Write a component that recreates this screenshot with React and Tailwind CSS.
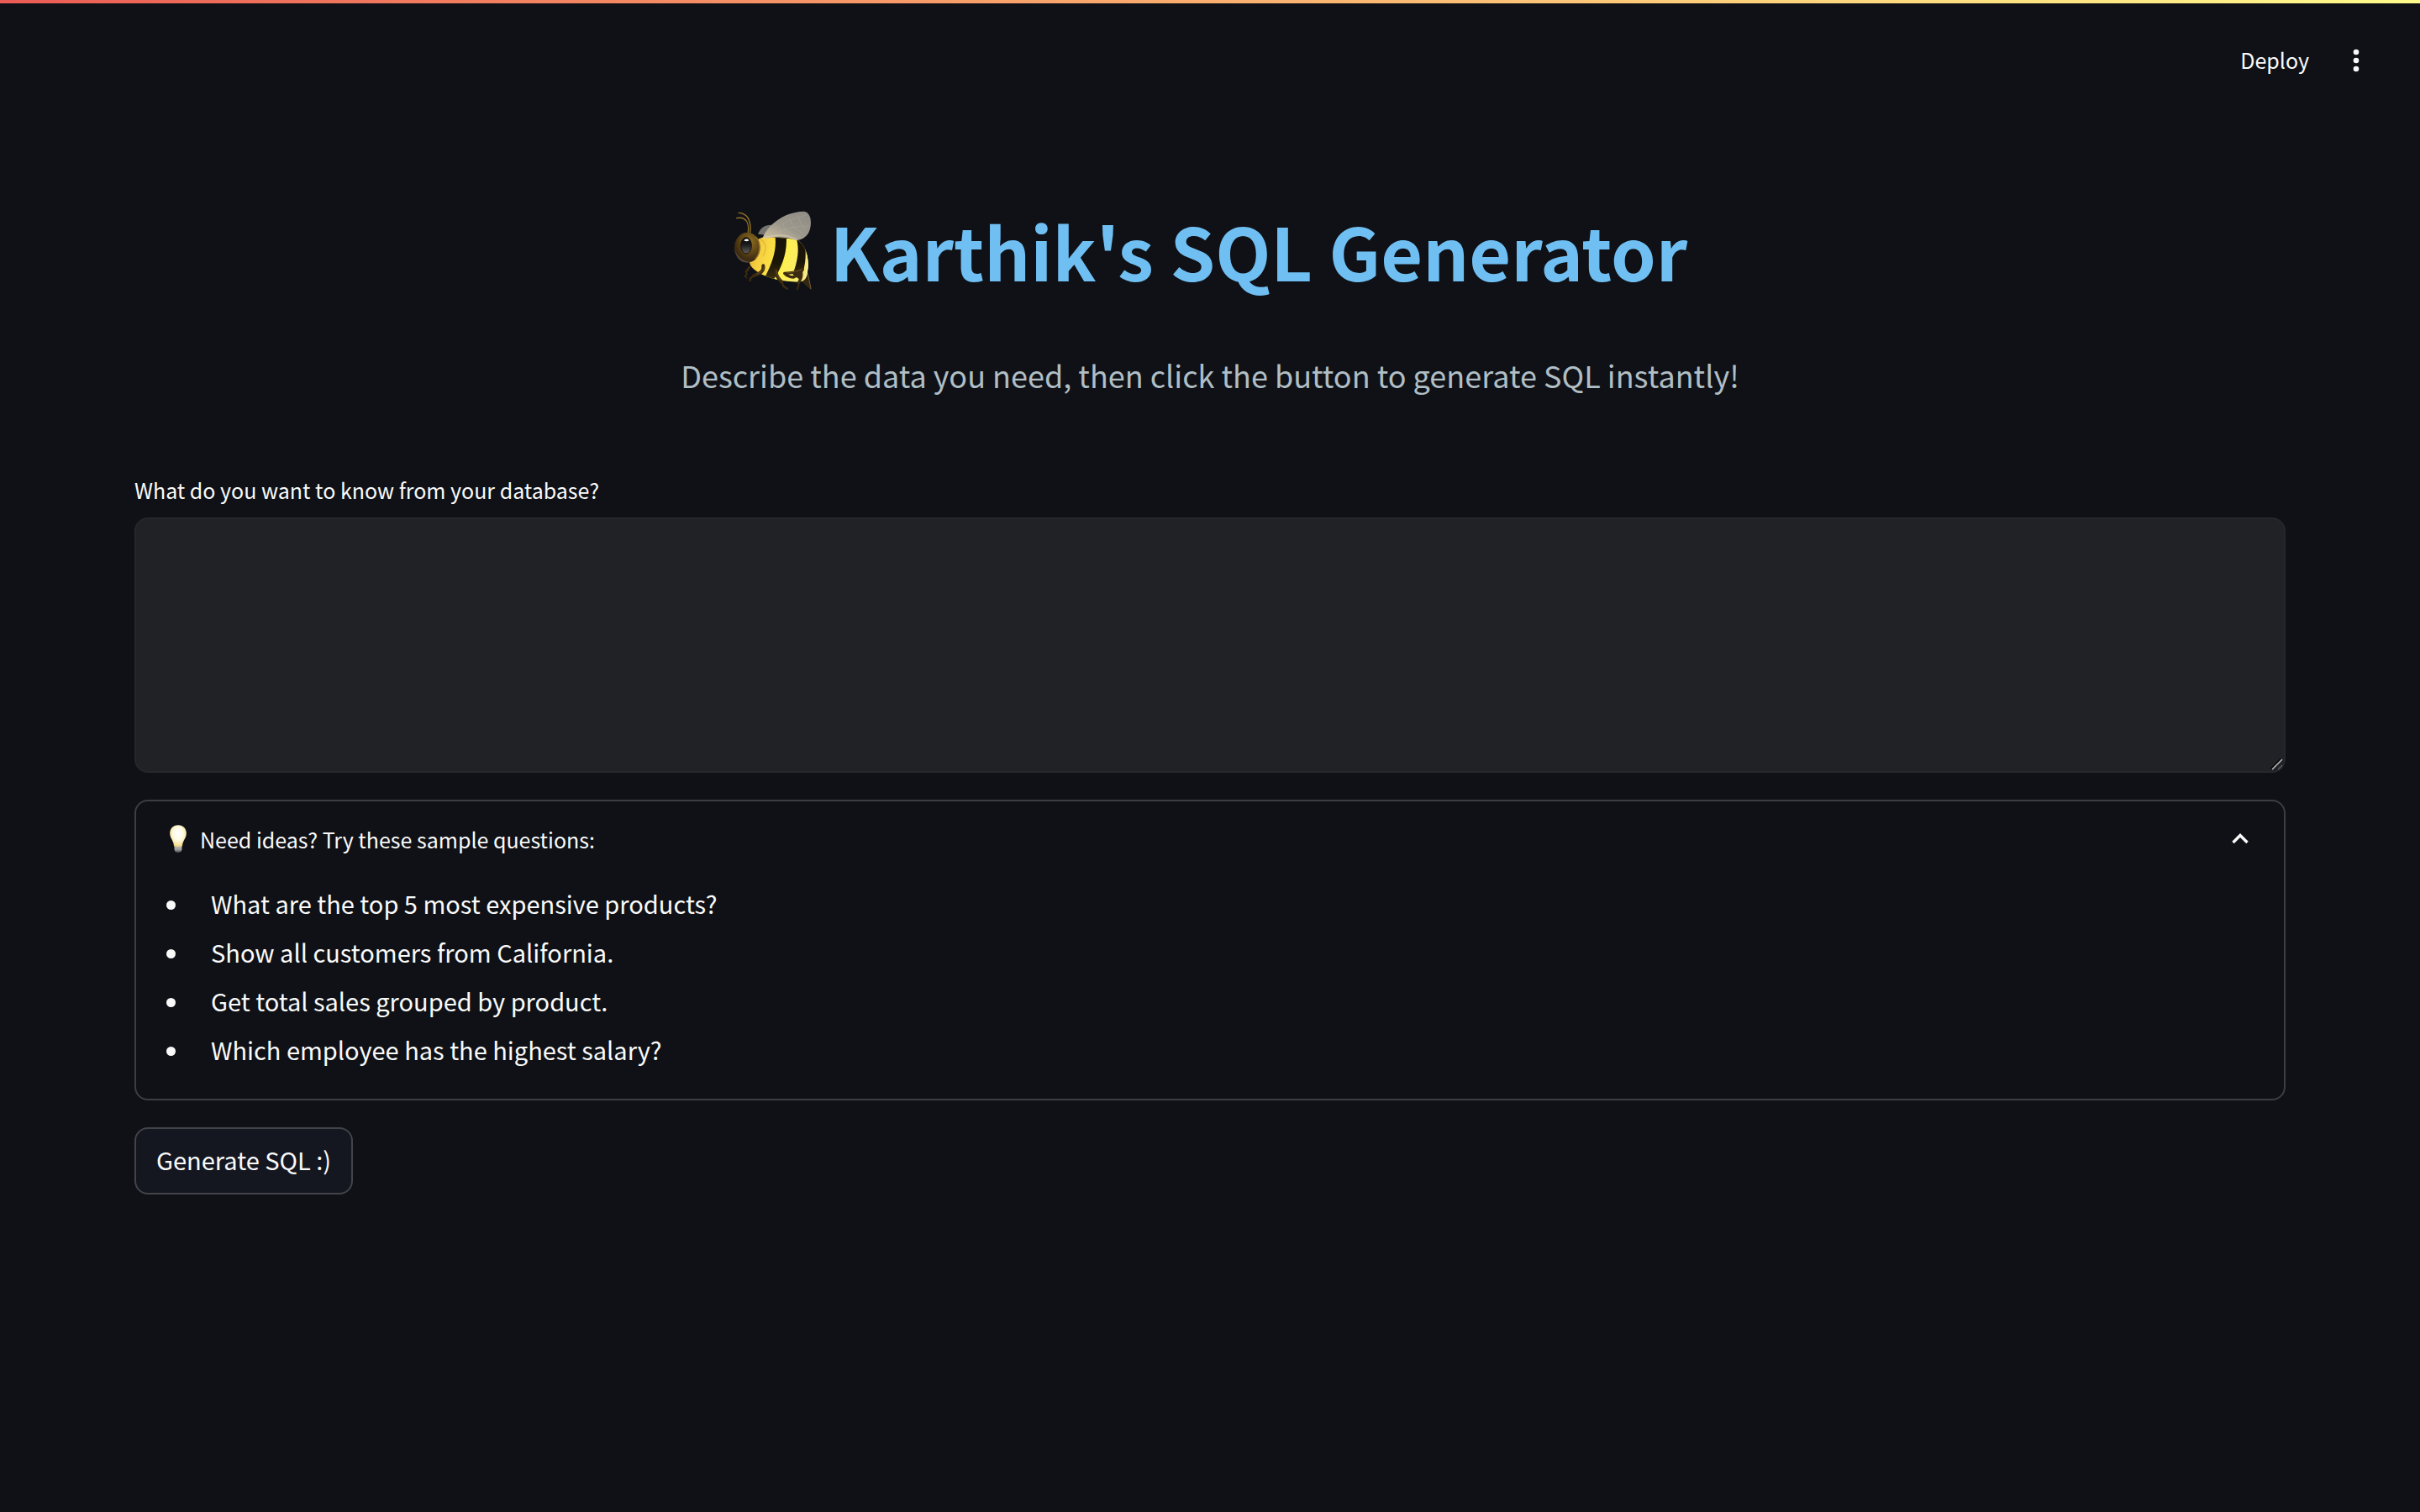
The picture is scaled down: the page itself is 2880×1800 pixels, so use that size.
import React from "react";

const QUESTIONS = [
  "What are the top 5 most expensive products?",
  "Show all customers from California.",
  "Get total sales grouped by product.",
  "Which employee has the highest salary?",
];

function Bee() {
  return (
    <svg viewBox="36 42 288 288" className="h-24 w-24 shrink-0" aria-hidden="true">
      <defs>
        <linearGradient id="beeBody" x1="0" y1="0" x2="1" y2="0.2">
          <stop offset="0" stopColor="#e0a733" />
          <stop offset="0.25" stopColor="#f6cf40" />
          <stop offset="0.6" stopColor="#fff04a" />
          <stop offset="1" stopColor="#f6e878" />
        </linearGradient>
        <linearGradient id="beeStripe" x1="0" y1="0" x2="0" y2="1">
          <stop offset="0" stopColor="#17120a" />
          <stop offset="0.6" stopColor="#1c1608" />
          <stop offset="1" stopColor="#3c300f" />
        </linearGradient>
        <radialGradient id="beeHead" cx="0.62" cy="0.3" r="0.75">
          <stop offset="0" stopColor="#8d6c22" />
          <stop offset="0.5" stopColor="#5d4515" />
          <stop offset="0.85" stopColor="#3a2812" />
          <stop offset="1" stopColor="#6a6050" />
        </radialGradient>
        <linearGradient id="beeEye" x1="0" y1="0" x2="0" y2="1">
          <stop offset="0" stopColor="#0a0a0c" />
          <stop offset="0.45" stopColor="#1b1b1d" />
          <stop offset="1" stopColor="#62605f" />
        </linearGradient>
        <linearGradient id="beeWing" x1="1" y1="0" x2="0.2" y2="1">
          <stop offset="0" stopColor="#8e8b84" />
          <stop offset="0.6" stopColor="#9d988c" />
          <stop offset="1" stopColor="#c9bda0" />
        </linearGradient>
        <clipPath id="beeClip">
          <path d="M96 228C96 160 120 138 165 138L262 146C295 160 312 215 303 262C300 288 290 300 268 299C215 297 165 287 130 266C110 254 98 244 96 228Z" />
        </clipPath>
      </defs>
      <path d="M126 128C136 103 155 92 184 96L160 132Z" fill="#77756f" />
      <path d="M284 232C299 252 311 289 316 327C296 312 281 296 270 278Z" fill="#35270f" />
      <path d="M299 254C306 279 312 303 315 325" stroke="#75603b" strokeWidth="3" fill="none" />
      <g clipPath="url(#beeClip)">
        <rect x="90" y="130" width="230" height="180" fill="url(#beeBody)" />
        <path d="M187 134C194 178 180 226 153 278L180 293C213 246 232 190 227 134Z" fill="url(#beeStripe)" />
        <path d="M262 140C276 180 268 225 250 272L275 290C294 257 301 207 293 160Z" fill="url(#beeStripe)" />
        <path d="M290 163C306 207 304 252 290 298L310 298L318 210Z" fill="#fff7a0" />
        <path d="M128 142C158 158 159 176 145 207" stroke="#d09a2f" strokeWidth="5" fill="none" opacity="0.4" />
      </g>
      <path d="M144 139C164 92 222 48 291 47C311 49 319 78 313 105C308 137 281 151 260 150C231 137 183 137 144 144Z" fill="url(#beeWing)" />
      <path d="M166 128C204 91 245 72 300 60M184 129C224 107 266 98 312 99M216 92L221 112L258 134M239 73L251 101L286 127M269 61L281 96L301 111" stroke="#bcb8ae" strokeWidth="2" fill="none" opacity="0.35" />
      <path d="M144 143C187 129 232 129 266 149" stroke="#ddd2b7" strokeWidth="5" fill="none" opacity="0.55" />
      <g fill="none" stroke="#977429" strokeWidth="4" strokeLinecap="round" strokeLinejoin="round">
        <path d="M98 123C102 98 96 69 79 59C72 54 64 52 57 52" />
        <path d="M91 123C94 103 90 82 77 74C68 69 59 69 50 71" />
      </g>
      <ellipse cx="88" cy="176" rx="46" ry="54" fill="url(#beeHead)" />
      <path d="M118 137C137 155 136 196 116 217" stroke="#b08b31" strokeWidth="4" fill="none" opacity="0.6" />
      <ellipse cx="84" cy="169" rx="19" ry="29" fill="url(#beeEye)" stroke="#191106" strokeWidth="3" />
      <path d="M76 151C80 144 91 144 94 151C90 155 81 155 76 151Z" fill="#f5f7f8" />
      <g fill="none" stroke="#3d2c11" strokeLinecap="round" strokeLinejoin="round">
        <path d="M96 246L84 262" strokeWidth="8" />
        <path d="M83 262L87 272L79 278L86 284" strokeWidth="5" />
        <path d="M145 241C148 260 136 267 112 276" strokeWidth="12" />
        <path d="M112 276L99 286L98 295" strokeWidth="7" />
        <path d="M190 257C190 274 197 286 211 299" strokeWidth="12" />
        <path d="M211 299L217 314L231 323" strokeWidth="7" />
        <path d="M286 255C269 263 248 267 221 268C229 277 242 281 253 282L280 267" strokeWidth="10" />
        <path d="M281 267C284 283 276 291 271 303" strokeWidth="10" />
        <path d="M271 303L270 316L266 326" strokeWidth="5" />
      </g>
      <g fill="none" stroke="#80602a" strokeWidth="3" strokeLinecap="round" opacity="0.7">
        <path d="M148 243C148 257 140 264 123 269" />
        <path d="M193 259C194 272 198 281 205 290" />
        <path d="M281 254C266 261 250 264 229 266" />
      </g>
    </svg>
  );
}

function Bulb() {
  return (
    <svg viewBox="0 0 20 34" className="h-[34px] w-5 shrink-0" aria-hidden="true">
      <defs>
        <radialGradient id="bulbGlow" cx="0.5" cy="0.4" r="0.6">
          <stop offset="0" stopColor="#ffffff" />
          <stop offset="0.5" stopColor="#fffbe4" />
          <stop offset="0.85" stopColor="#f9e5a0" />
          <stop offset="1" stopColor="#ecd17c" />
        </radialGradient>
        <linearGradient id="bulbBase" x1="0" y1="0" x2="0" y2="1">
          <stop offset="0" stopColor="#c9c4bb" />
          <stop offset="0.6" stopColor="#9b9b9b" />
          <stop offset="1" stopColor="#3b3c40" />
        </linearGradient>
      </defs>
      <path d="M5.5 24h9v5.500Q14 32 12 32.500Q10 34 8 32.500Q6 32 5.500 29.500Z" fill="url(#bulbBase)" />
      <path d="M10 0.300C4 0.300 0.200 4.700 0.200 10C0.200 16 4.600 18.500 5 25.200Q10 26.600 15 25.200C15.400 18.500 19.800 16 19.800 10C19.800 4.700 16 0.300 10 0.300Z" fill="url(#bulbGlow)" />
    </svg>
  );
}

export default function App() {
  return (
    <div className="min-h-screen bg-[#0f1116] font-['Noto_Sans_CJK_SC','Noto_Sans',sans-serif] text-[#fafafa]">
      <div className="h-1 bg-linear-to-r from-[#ea5c55] to-[#fefb8b]" />
      <header className="flex h-[136px] items-center justify-end gap-11 pr-16">
        <button type="button" className="pb-[2px] text-[25px] leading-10">
          Deploy
        </button>
        <button type="button" aria-label="Main menu" className="flex w-6 justify-center">
          <svg viewBox="0 0 8 28" className="h-7 w-2" fill="currentColor" aria-hidden="true">
            <circle cx="4" cy="4" r="3.300" />
            <circle cx="4" cy="14" r="3.300" />
            <circle cx="4" cy="24" r="3.300" />
          </svg>
        </button>
      </header>

      <main className="px-40 pt-[98px] pb-40">
        <h1 className="flex items-center justify-center gap-5 text-[86px] leading-[120px] font-bold text-[#70bff2]">
          <Bee />
          Karthik's SQL Generator
        </h1>
        <p className="mt-[58px] text-center text-[36px] leading-[60px] text-[#b0bec5]">
          Describe the data you need, then click the button to generate SQL instantly!
        </p>

        <label htmlFor="question" className="mt-[87px] block text-[25px] leading-10">
          What do you want to know from your database?
        </label>
        <div className="relative mt-[13px]">
          <textarea
            id="question"
            className="block h-[304px] w-full resize-none rounded-2xl border-2 border-[#26272c] bg-[#212226] p-6 text-[29px] outline-none"
          />
          <svg viewBox="0 0 16 16" className="pointer-events-none absolute right-[2px] bottom-[2px] h-4 w-4" fill="none" aria-hidden="true">
            <path d="M0.500 13.500L12.500 1.500" stroke="#08090b" strokeWidth="2" />
            <path d="M2 14L14 2" stroke="#b9b9bb" strokeWidth="1.600" />
            <path d="M9 14L14 9" stroke="#55565a" strokeWidth="1.600" />
          </svg>
        </div>

        <details open className="mt-8 rounded-2xl border-2 border-[#3d3e42] px-9 pt-[25px] pb-[30px]">
          <summary className="flex cursor-pointer list-none items-center pl-1 text-[25px] leading-10">
            <Bulb />
            <span className="ml-4 grow">Need ideas? Try these sample questions:</span>
            <svg viewBox="0 0 24 16" className="mr-1 h-4 w-6" fill="none" stroke="currentColor" strokeWidth="3.500" aria-hidden="true">
              <path d="M3.500 12L12 3.500L20.500 12" />
            </svg>
          </summary>
          <ul className="mt-[27px] text-[29px] leading-[58px]">
            {QUESTIONS.map((q) => (
              <li key={q} className="flex items-center gap-[42px]">
                <span className="mt-1 h-[11px] w-[11px] rounded-full bg-[#fafafa]" />
                {q}
              </li>
            ))}
          </ul>
        </details>

        <button
          type="button"
          className="mt-8 h-20 rounded-2xl border-2 border-[#434449] bg-[#141720] px-6 pb-1 text-[29px] leading-10"
        >
          Generate SQL :)
        </button>
      </main>
    </div>
  );
}
